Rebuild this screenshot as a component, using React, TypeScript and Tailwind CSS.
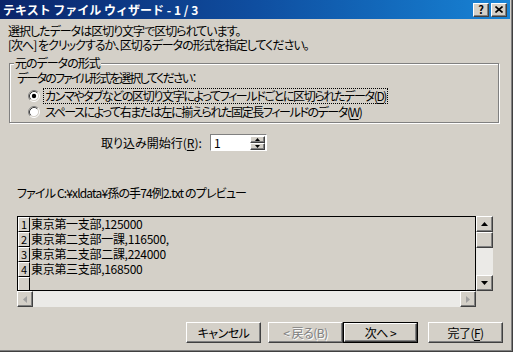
import React from "react";

const raised =
  "bg-[#d4d0c8] border border-t-white border-l-white border-r-[#404040] border-b-[#404040] shadow-[inset_-1px_-1px_#808080]";

function Radio({ checked }: { checked?: boolean }) {
  return (
    <svg width="12" height="12" viewBox="0 0 12 12" className="shrink-0">
      <circle cx="6" cy="6" r="4.5" fill="white" />
      <path d="M2.11 9.89 A5.5 5.5 0 0 1 9.89 2.11" stroke="#808080" fill="none" />
      <path d="M9.89 2.11 A5.5 5.5 0 0 1 2.11 9.89" stroke="white" fill="none" />
      <path d="M2.82 9.18 A4.5 4.5 0 0 1 9.18 2.82" stroke="#404040" fill="none" />
      <path d="M9.18 2.82 A4.5 4.5 0 0 1 2.82 9.18" stroke="#d4d0c8" fill="none" />
      {checked && <circle cx="6" cy="6" r="2.2" fill="black" />}
    </svg>
  );
}

function Arrow({ dir, color = "black", size = 7 }: { dir: "up" | "down" | "left" | "right"; color?: string; size?: number }) {
  const h = Math.ceil(size / 2);
  const pts = {
    up: `0,${h} ${size},${h} ${size / 2},0`,
    down: `0,0 ${size},0 ${size / 2},${h}`,
    left: `${h},0 ${h},${size} 0,${size / 2}`,
    right: `0,0 0,${size} ${h},${size / 2}`,
  }[dir];
  const horiz = dir === "left" || dir === "right";
  return (
    <svg width={horiz ? h : size} height={horiz ? size : h} viewBox={`0 0 ${horiz ? h : size} ${horiz ? size : h}`}>
      <polygon points={pts} fill={color} />
    </svg>
  );
}

function U({ children }: { children: React.ReactNode }) {
  return <span className="underline underline-offset-2">{children}</span>;
}

const rows = [
  "東京第一支部,125000",
  "東京第二支部一課,116500,",
  "東京第二支部二課,224000",
  "東京第三支部,168500",
];

function Button({ children, def, disabled }: { children: React.ReactNode; def?: boolean; disabled?: boolean }) {
  const inner = (
    <div
      className={`${raised} h-full w-full flex items-center justify-center text-[12px] tracking-[-0.5px] ${
        disabled ? "text-[#808080] [text-shadow:1px_1px_white]" : "text-black"
      }`}
    >
      {children}
    </div>
  );
  return def ? (
    <div className="w-[75px] h-[21px] border border-black">{inner}</div>
  ) : (
    <div className="w-[75px] h-[21px]">{inner}</div>
  );
}

export default function App() {
  return (
    <div className="w-[513px] h-[352px] bg-[#d4d0c8] font-['Noto_Sans_CJK_JP',sans-serif] [font-feature-settings:'palt'] tracking-[-1px] text-black text-[12px] leading-[14px] flex flex-col pr-[3px] pb-[3px] shadow-[inset_-1px_-1px_#404040,inset_-2px_-2px_#808080] overflow-hidden">
      {/* title bar */}
      <div className="h-[19px] shrink-0 flex items-center justify-between pl-[3px] pr-[3px] bg-gradient-to-r from-[#0a246a] via-[#0f4ea0] to-[#1884d6]">
        <span className="text-white font-bold text-[12px] tracking-[0px] [font-feature-settings:normal]">テキスト ファイル ウィザード - 1 / 3</span>
        <div className="flex gap-[2px]">
          <div className={`${raised} w-[16px] h-[14px] flex items-center justify-center text-[11px] font-bold leading-none tracking-[0px]`}>?</div>
          <div className={`${raised} w-[16px] h-[14px] flex items-center justify-center`}>
            <svg width="8" height="7" viewBox="0 0 8 7">
              <path d="M0.5 0.5 L7.5 6.5 M7.5 0.5 L0.5 6.5" stroke="black" strokeWidth="1.6" />
            </svg>
          </div>
        </div>
      </div>

      {/* body */}
      <div className="flex flex-col pl-[8px] pt-[5px] grow">
        <div>選択したデータは区切り文字で区切られています。</div>
        <div>[次へ] をクリックするか、区切るデータの形式を指定してください。</div>

        {/* group box */}
        <div className="relative mt-[11px] ml-[1px] w-[490px] h-[60px] border border-[#808080] shadow-[inset_1px_1px_white,1px_1px_white] pl-[7px] pt-[7px]">
          <div className="absolute -top-[8px] left-[4px] px-[1px] bg-[#d4d0c8]">元のデータの形式</div>
          <div className="tracking-[-1.8px]">データのファイル形式を選択してください：</div>
          <div className="mt-[3px] ml-[11px] flex items-center gap-[3px] h-[16px]">
            <Radio checked />
            <span className="border border-dotted border-black px-[1px] h-[16px] flex items-center tracking-[-1.35px]">
              カンマやタブなどの区切り文字によってフィールドごとに区切られたデータ(<U>D</U>)
            </span>
          </div>
          <div className="ml-[11px] flex items-center gap-[4px] h-[15px]">
            <Radio />
            <span className="pl-[1px] tracking-[-1.4px]">
              スペースによって右または左に揃えられた固定長フィールドのデータ(<U>W</U>)
            </span>
          </div>
        </div>

        {/* start row */}
        <div className="mt-[11px] ml-[93px] flex items-center h-[17px]">
          <span className="w-[111px] tracking-[0px]">取り込み開始行(<U>R</U>):</span>
          <div className="ml-[-2px] w-[57px] h-[17px] flex border border-t-[#808080] border-l-[#808080] border-r-white border-b-white shadow-[inset_1px_1px_#404040]">
            <div className="grow bg-white pl-[3px] pt-[1px] text-[12px] leading-[14px]">1</div>
            <div className="w-[16px] flex flex-col bg-white pt-[1px] pr-[1px]">
              <div className={`${raised} h-[7px] flex items-center justify-center`}>
                <Arrow dir="up" size={5} />
              </div>
              <div className={`${raised} h-[7px] flex items-center justify-center`}>
                <Arrow dir="down" size={5} />
              </div>
            </div>
          </div>
        </div>

        {/* preview label */}
        <div className="mt-[35px] ml-[9px] tracking-[-0.85px]">ファイル C:¥xldata¥孫の手74例2.txt のプレビュー</div>

        {/* preview */}
        <div className="mt-[16px] ml-[9px] w-[476px] flex flex-col">
          <div className="flex h-[75px]">
            <div className="w-[459px] border-t border-l border-r border-b border-black overflow-hidden flex flex-col">
              {[...rows, ""].map((r, i) => (
                <div key={i} className="flex h-[15px] shrink-0">
                  <div className="w-[12px] shrink-0 border-t border-l border-t-white border-l-white border-b border-r border-black bg-[#d4d0c8] flex items-end justify-center text-[11px] leading-[13px] tracking-[0px]">
                    {r ? i + 1 : ""}
                  </div>
                  <div className="pl-[1px] text-[12px] leading-[14px] tracking-[-0.3px] [font-feature-settings:normal]">{r}</div>
                </div>
              ))}
            </div>
            <div className="w-[17px] flex flex-col">
              <div className={`${raised} h-[16px] flex items-center justify-center`}>
                <Arrow dir="up" />
              </div>
              <div className={`${raised} h-[16px]`} />
              <div className="grow bg-[#ebeae7]" />
              <div className={`${raised} h-[16px] flex items-center justify-center`}>
                <Arrow dir="down" />
              </div>
            </div>
          </div>
          <div className="flex h-[16px]">
            <div className="w-[459px] flex bg-[#ebeae7]">
              <div className={`${raised} w-[16px] flex items-center justify-center`}>
                <Arrow dir="left" color="#a0a0a0" />
              </div>
              <div className="grow" />
              <div className={`${raised} w-[16px] flex items-center justify-center`}>
                <Arrow dir="right" color="#a0a0a0" />
              </div>
            </div>
          </div>
        </div>

        {/* buttons */}
        <div className="mt-[15px] flex items-center pl-[178px]">
          <Button>キャンセル</Button>
          <div className="w-[7px]" />
          <Button disabled>&lt; 戻る(B)</Button>
          <Button def>次へ &gt;</Button>
          <div className="w-[10px]" />
          <Button>
            完了(<U>F</U>)
          </Button>
        </div>
      </div>
    </div>
  );
}
